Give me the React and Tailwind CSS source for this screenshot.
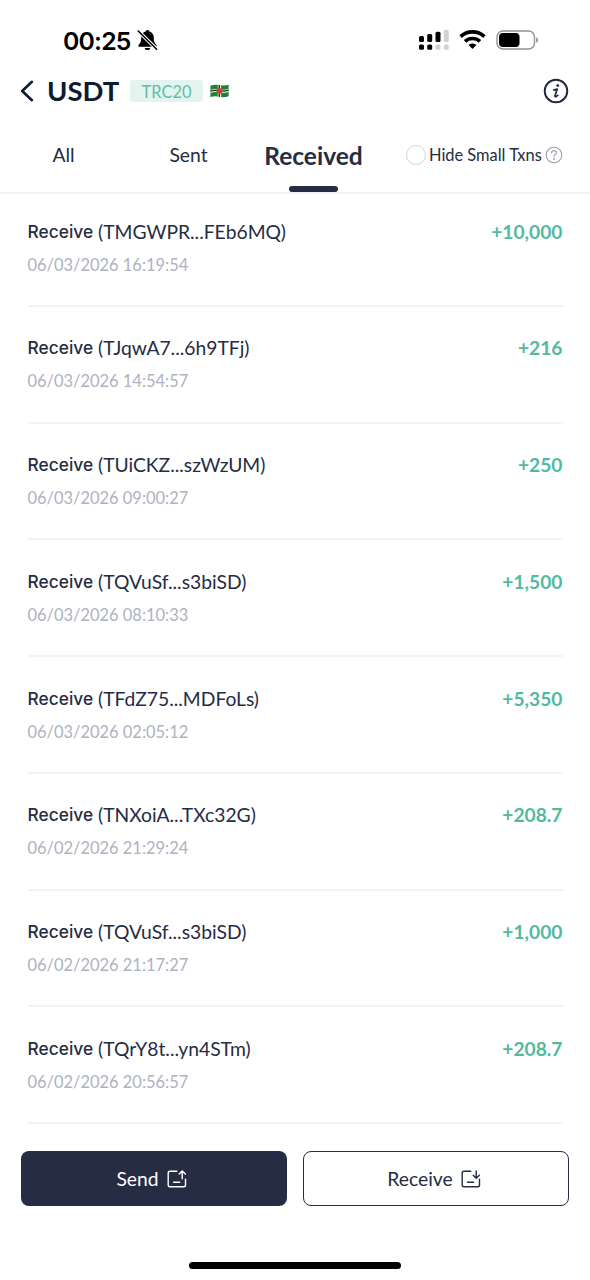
import React from 'react';

const transactions = [
  ['(TMGWPR...FEb6MQ)', '06/03/2026 16:19:54', '+10,000'],
  ['(TJqwA7...6h9TFj)', '06/03/2026 14:54:57', '+216'],
  ['(TUiCKZ...szWzUM)', '06/03/2026 09:00:27', '+250'],
  ['(TQVuSf...s3biSD)', '06/03/2026 08:10:33', '+1,500'],
  ['(TFdZ75...MDFoLs)', '06/03/2026 02:05:12', '+5,350'],
  ['(TNXoiA...TXc32G)', '06/02/2026 21:29:24', '+208.7'],
  ['(TQVuSf...s3biSD)', '06/02/2026 21:17:27', '+1,000'],
  ['(TQrY8t...yn4STm)', '06/02/2026 20:56:57', '+208.7'],
];

function BellOff() {
  return (
    <svg className="h-[22px] w-[21px]" viewBox="0 0 21 22" fill="none">
      <path d="M10.5 1C9.3 1 8.6 1.8 8.5 2.5C5.4 3.4 4.2 6 4.2 9C4.2 13.3 3.2 14 1.6 15.9C.9 16.9 1.4 17.7 2.5 17.7H18.5C19.6 17.7 20.1 16.9 19.4 15.9C17.8 14 16.8 13.3 16.8 9C16.8 6 15.6 3.4 12.5 2.5C12.4 1.8 11.7 1 10.5 1Z" fill="#000" />
      <path d="M7.7 18.9H13.3C12.9 20.4 12 21.1 10.5 21.1C9 21.1 8.1 20.4 7.7 18.9Z" fill="#000" />
      <path d="M1 1.8L20 20.5" stroke="#fff" strokeWidth="3.6" />
      <path d="M1.2 2L19.6 20.2" stroke="#000" strokeWidth="1.6" strokeLinecap="round" />
    </svg>
  );
}

function Signal() {
  return (
    <svg className="h-[22px] w-[30px]" viewBox="0 0 30 22">
      <g fill="#000">
        <rect x="0" y="7" width="5" height="6" rx="1.5" />
        <rect x="8.2" y="5" width="5" height="8" rx="1.5" />
        <rect x="16.5" y="2.8" width="5" height="10.2" rx="1.5" />
        <rect x="0" y="15.5" width="5" height="5.2" rx="1.5" />
        <rect x="8.2" y="15.5" width="5" height="5.2" rx="1.5" />
      </g>
      <g fill="#d2d2d2">
        <rect x="24.8" y="0.7" width="5" height="12.3" rx="1.5" />
        <rect x="16.5" y="15.5" width="5" height="5.2" rx="1.5" />
        <rect x="24.8" y="15.5" width="5" height="5.2" rx="1.5" />
      </g>
    </svg>
  );
}

function Wifi() {
  return (
    <svg className="h-[20px] w-[27px]" viewBox="0 0 27 20" fill="none" stroke="#000" strokeWidth="3.7">
      <path d="M1.6 6.6C8.3 .4 18.7 .4 25.4 6.6" />
      <path d="M6 11.4C10.3 7.5 16.7 7.5 21 11.4" />
      <path d="M13.5 19L9.6 15C11.9 13 15.1 13 17.4 15Z" fill="#000" stroke="none" />
    </svg>
  );
}

function Battery() {
  return (
    <svg className="h-[20px] w-[43px]" viewBox="0 0 43 20" fill="none">
      <rect x="1" y="1" width="37.5" height="18" rx="5.8" stroke="#939393" strokeWidth="1.4" />
      <rect x="3" y="3" width="20.5" height="14" rx="4" fill="#000" />
      <path d="M40.2 7.2C42.8 8 42.8 12 40.2 12.8Z" fill="#939393" />
    </svg>
  );
}

function DominicaFlag() {
  return (
    <svg className="ml-[7px] h-[14px] w-[19px]" viewBox="0 0 19 14">
      <path d="M.4 1.7Q5 .1 9.5 1.1T18.6 .8V12.3Q14 13.8 9.5 12.8T.4 13.1Z" fill="#1d813c" />
      <path d="M.4 6.1Q5 4.7 9.5 5.7T18.6 5.4" stroke="#e9d34d" strokeWidth="1" fill="none" />
      <path d="M.4 7.2Q5 5.8 9.5 6.8T18.6 6.5" stroke="#222" strokeWidth="1" fill="none" />
      <path d="M.4 8.3Q5 6.9 9.5 7.9T18.6 7.6" stroke="#fff" strokeWidth="1" fill="none" />
      <path d="M8.2 1V12.7" stroke="#e9d34d" strokeWidth="1" />
      <path d="M9.4 1V12.8" stroke="#222" strokeWidth="1" />
      <path d="M10.6 1.2V12.9" stroke="#fff" strokeWidth="1" />
      <circle cx="9.4" cy="6.9" r="3" fill="#d63c3b" />
      <circle cx="9.4" cy="6.9" r="1" fill="#507c3f" />
    </svg>
  );
}

function TransferIcon({ down }) {
  return (
    <svg className="ml-[8px] h-[18px] w-[20px]" viewBox="0 0 20 18" fill="none" stroke="currentColor" strokeWidth="1.4" strokeLinecap="round" strokeLinejoin="round">
      <path d="M9.8 1.2H3Q1.2 1.2 1.2 3V15Q1.2 16.8 3 16.8H16.7Q18.5 16.8 18.5 15V9.2" />
      <path d="M6.5 12.2H12.7" />
      <path d={down ? 'M15.2 .9V8M12.2 5.3L15.2 8.2L18.4 5.3' : 'M15.2 8.7V1.1M12.2 4L15.2 1L18.4 4'} />
    </svg>
  );
}

function Transaction({ address, date, amount }) {
  return (
    <li className="flex h-[116.75px] items-start justify-between border-b-2 border-[#f4f4f5] pt-[29px]">
      <div>
        <div className="flex h-[26px] items-center whitespace-nowrap text-[#252c43]">
          <span className="w-[70.5px] pb-px font-['Inter',sans-serif] text-[17.3px] font-medium tracking-[0.05px]">Receive</span>
          <span className="text-[19.3px]">{address}</span>
        </div>
        <div className="mt-[8px] flex h-[24px] items-center text-[16.45px] text-[#aeb2c1]">{date}</div>
      </div>
      <div className="flex h-[26px] items-center text-[19.2px] font-bold text-[#53b9a1]">{amount}</div>
    </li>
  );
}

export default function App() {
  return (
    <div className="flex h-[1280px] w-[590px] flex-col overflow-hidden bg-white font-['Lato',sans-serif] text-[#252c43]">
      <div className="flex h-[65px] items-center justify-between pr-[51px] pl-[63px] pt-[15px]">
        <div className="flex items-center text-black">
          <span className="w-[74px] pt-px font-['Inter',sans-serif] text-[24.8px] leading-[30px] font-semibold tracking-[-0.8px]">00:25</span>
          <BellOff />
        </div>
        <div className="flex items-center">
          <Signal />
          <span className="ml-[10px] flex"><Wifi /></span>
          <span className="ml-[10px] flex"><Battery /></span>
        </div>
      </div>

      <header className="flex h-[52px] items-center pr-[21px] pl-[19px]">
        <svg className="h-[22px] w-[15px]" viewBox="0 0 15 22" fill="none">
          <path d="M12.9 1.8L3.2 11L12.9 20.2" stroke="#0c1c30" strokeWidth="2.6" strokeLinecap="round" strokeLinejoin="round" />
        </svg>
        <h1 className="ml-[13px] w-[83px] text-[27.5px] font-bold text-[#0c1c30]">USDT</h1>
        <span className="flex h-[22px] w-[73px] items-center justify-center rounded-[3px] bg-[#e3f4f0] pt-[2px] text-[16.4px] text-[#62bca8]">TRC20</span>
        <DominicaFlag />
        <svg className="ml-auto h-[26px] w-[26px]" viewBox="0 0 26 26" fill="none" stroke="#20253d">
          <circle cx="13" cy="13" r="11.3" strokeWidth="1.9" />
          <circle cx="14.8" cy="7.6" r="1.4" fill="#20253d" stroke="none" />
          <path d="M10.7 12L14.2 11.1L12 17.8Q11.8 19.8 14.9 17.4" strokeWidth="1.7" strokeLinecap="round" strokeLinejoin="round" />
        </svg>
      </header>

      <nav className="flex h-[77px] items-center border-b-2 border-[#f3f3f4] pl-[1px]">
        <span className="w-[125px] pt-[2px] text-center text-[19.3px]">All</span>
        <span className="w-[125px] pt-[2px] text-center text-[19.3px]">Sent</span>
        <div className="relative flex h-full w-[125px] items-center justify-center pt-[3px] text-[24.5px] font-bold">
          Received
          <span className="absolute bottom-0 left-[38px] h-[6px] w-[49px] rounded-[3px] bg-[#252c43]" />
        </div>
        <span className="ml-[30px] h-[20px] w-[20px] rounded-full border-[1.5px] border-[#d1d3d8]" />
        <span className="ml-[3px] w-[116px] pt-[2px] whitespace-nowrap text-[16.4px]">Hide Small Txns</span>
        <svg className="h-[18px] w-[18px]" viewBox="0 0 18 18" fill="none" stroke="#9a9eae" strokeWidth="1.1" strokeLinecap="round">
          <circle cx="9" cy="9" r="7.8" />
          <path d="M6.6 7Q6.6 4.6 9 4.6T11.4 6.8Q11.4 8 10 8.8Q9 9.4 9 10.5" />
          <circle cx="9" cy="13" r=".35" fill="#9a9eae" />
        </svg>
      </nav>

      <ul className="-mt-[4px] flex flex-col px-[27.5px]">
        {transactions.map(([address, date, amount], i) => (
          <Transaction key={i} address={address} date={date} amount={amount} />
        ))}
      </ul>

      <footer className="flex gap-[16.5px] pt-[27px] pl-[20.5px]">
        <button className="flex h-[55px] w-[266px] items-center justify-center rounded-[8px] bg-[#252c43] pr-[4px] text-[19.3px] text-white">
          <span className="pt-[2px]">Send</span>
          <TransferIcon />
        </button>
        <button className="flex h-[55px] w-[266px] items-center justify-center rounded-[8px] border-[1.5px] border-[#252c43] pr-[4px] text-[19.3px]">
          <span className="pt-[2px]">Receive</span>
          <TransferIcon down />
        </button>
      </footer>
      <div className="mx-auto mt-auto mb-[11px] h-[7px] w-[212px] shrink-0 rounded-full bg-black" />
    </div>
  );
}
